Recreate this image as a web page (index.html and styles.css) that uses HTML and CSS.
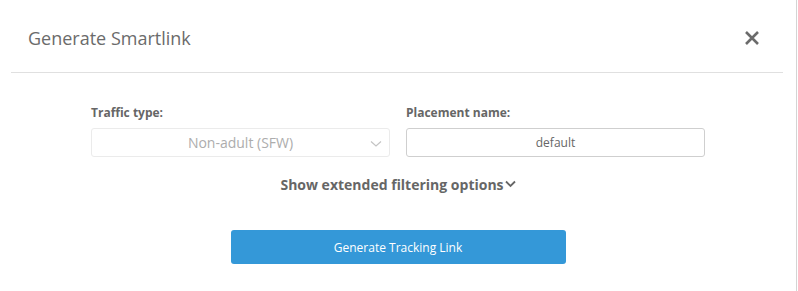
FILE: index.html
```html
<!DOCTYPE html>
<html lang="en">
<head>
    <meta charset="UTF-8">
    <meta name="viewport" content="width=device-width, initial-scale=1.0">
    <title>Generate Smartlink</title>
    <link rel="stylesheet" href="styles.css">
</head>
<body>
    <div class="modal">
        <div class="modal-header">
            <h4 class="modal-title">Generate Smartlink</h4>
            <button class="close" type="button" aria-label="Close">
                <svg width="16" height="16" viewBox="0 0 16 16">
                    <path d="M2 2 L14 14 M14 2 L2 14" stroke="#6b6b6b" stroke-width="2.6" stroke-linecap="butt"/>
                </svg>
            </button>
        </div>

        <div class="modal-body">
            <div class="fields">
                <div class="field">
                    <label>Traffic type:</label>
                    <div class="select disabled">
                        <span>Non-adult (SFW)</span>
                        <svg class="caret" width="12" height="8" viewBox="0 0 12 8">
                            <path d="M1 1.5 L6 6 L11 1.5" fill="none" stroke="#c4c4c4" stroke-width="1.2"/>
                        </svg>
                    </div>
                </div>
                <div class="field">
                    <label>Placement name:</label>
                    <input class="text-input" type="text" value="default">
                </div>
            </div>

            <div class="extended">
                <a href="#">Show extended filtering options<svg width="11" height="8" viewBox="0 0 11 8"><path d="M1 1.5 L5.5 6 L10 1.5" fill="none" stroke="#666" stroke-width="1.8"/></svg></a>
            </div>

            <div class="actions">
                <button class="btn-primary" type="button">Generate Tracking Link</button>
            </div>
        </div>
    </div>
</body>
</html>
```

FILE: styles.css
```css
body {
    margin: 0;
    font-family: "Open Sans", Arial, sans-serif;
    background-color: #fff;
    color: #666;
}
.modal {
    width: 797px;
    height: 291px;
    border-right: 1px solid #d4d4d4;
    box-sizing: border-box;
}
.modal-header {
    margin: 0 13px 0 11px;
    padding: 24px 23px 0 17px;
    height: 48px;
    border-bottom: 1px solid #e0e0e0;
    display: flex;
    justify-content: space-between;
    align-items: flex-start;
}
.modal-title {
    margin: 0;
    font-size: 18px;
    font-weight: normal;
    line-height: 28px;
    color: #6b6b6b;
}
.close {
    background: none;
    border: none;
    padding: 0;
    margin-top: 6px;
    cursor: pointer;
    line-height: 0;
}
.modal-body {
    padding-top: 31px;
}
.fields {
    display: flex;
    justify-content: center;
    gap: 16px;
}
.field {
    width: 299px;
}
.field label {
    display: block;
    font-size: 12px;
    font-weight: bold;
    line-height: 17px;
    margin-bottom: 7px;
    color: #666;
}
.select, .text-input {
    box-sizing: border-box;
    width: 100%;
    height: 29px;
    border-radius: 3px;
    font-family: inherit;
    font-size: 12px;
    text-align: center;
}
.select {
    position: relative;
    display: flex;
    align-items: center;
    justify-content: center;
    border: 1px solid #ebebeb;
    color: #adadad;
    font-size: 14px;
}
.select .caret {
    position: absolute;
    right: 7px;
    top: 11px;
}
.text-input {
    border: 1px solid #cfcfcf;
    color: #666;
    padding: 0;
    outline: none;
}
.extended {
    text-align: center;
    margin-top: 16px;
}
.extended a {
    font-size: 14px;
    font-weight: bold;
    color: #666;
    text-decoration: none;
    line-height: 20px;
}
.extended svg {
    margin-left: 1px;
    vertical-align: 2px;
}
.actions {
    display: flex;
    justify-content: center;
    margin-top: 35px;
}
.btn-primary {
    width: 335px;
    height: 34px;
    background-color: #3498d8;
    color: #fff;
    border: none;
    border-radius: 3px;
    font-family: inherit;
    font-size: 12px;
    cursor: pointer;
}
```
